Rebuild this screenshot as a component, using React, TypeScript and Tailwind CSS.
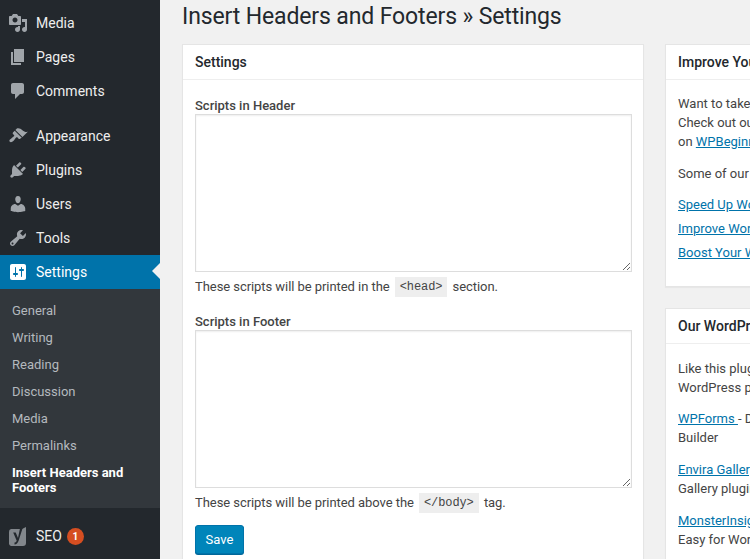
import React from 'react';

// Dashicons paths on a 20x20 grid
const icons: Record<string, string> = {
  media: 'M13 11V4c0-.55-.45-1-1-1h-1.67L9 1H5L3.67 3H2c-.55 0-1 .45-1 1v7c0 .55.45 1 1 1h10c.55 0 1-.45 1-1zM7 4.5c1.38 0 2.5 1.12 2.5 2.5S8.38 9.5 7 9.5 4.5 8.38 4.5 7 5.62 4.5 7 4.5zM14 6h5v10.5c0 1.38-1.12 2.5-2.5 2.5S14 17.88 14 16.5s1.12-2.5 2.5-2.5c.17 0 .34.02.5.05V9h-3V6zm-4 8.05V13h2v3.5c0 1.38-1.12 2.5-2.5 2.5S7 17.88 7 16.5 8.12 14 9.5 14c.17 0 .34.02.5.05z',
  pages: 'M6 15V2h10v13H6zm-1 1h8v2H3V5h2v11z',
  comments: 'M5 2h9c1.1 0 2 .9 2 2v7c0 1.1-.9 2-2 2h-2l-5 5v-5H5c-1.1 0-2-.9-2-2V4c0-1.1.9-2 2-2z',
  appearance: 'M14.48 11.06L7.41 3.99l1.5-1.5c.5-.56 2.3-.47 3.51.32 1.21.8 1.43 1.28 2.91 2.1 1.18.64 2.45 1.26 4.45.85zm-.71.71L6.7 4.7 4.93 6.47c-.39.39-.39 1.02 0 1.41l1.06 1.06c.39.39.39 1.03 0 1.42-.6.6-1.43 1.11-2.21 1.69-.35.26-.7.53-1.01.84C1.43 13.23.91 14.8 1.8 15.7c.9.89 2.47.37 3.8-.86.31-.31.58-.66.84-1.01.58-.78 1.09-1.61 1.69-2.21.39-.39 1.03-.39 1.42 0l1.06 1.06c.39.39 1.02.39 1.41 0z',
  plugins: 'M13.11 4.36L9.87 7.6 8 5.73l3.24-3.24c.35-.34 1.05-.2 1.56.32.52.51.66 1.21.31 1.55zm-8 1.77l.91-1.12 9.01 9.01-1.19.84c-.71.71-2.63 1.16-3.82 1.16H6.14L4.9 17.26c-.59.59-1.54.59-2.12 0-.59-.58-.59-1.53 0-2.12l1.24-1.24v-3.88c0-1.13.4-3.19 1.09-3.89zm7.26 3.97l3.24-3.24c.34-.35 1.04-.21 1.55.31.52.51.66 1.21.31 1.55l-3.24 3.25z',
  users: 'M10 9.25c-2.27 0-2.73-3.44-2.73-3.44C7 4.02 7.82 2 9.97 2c2.16 0 2.98 2.02 2.71 3.81 0 0-.41 3.44-2.68 3.44zm0 2.57L12.72 10c2.39 0 4.52 2.33 4.52 4.53v2.49s-3.65 1.13-7.24 1.13c-3.65 0-7.24-1.13-7.24-1.13v-2.49c0-2.25 1.94-4.48 4.47-4.48z',
  tools: 'M16.68 9.77c-1.34 1.34-3.3 1.67-4.95.99l-5.41 6.52c-.99.99-2.59.99-3.58 0s-.99-2.59 0-3.57l6.52-5.42c-.68-1.65-.35-3.61.99-4.95 1.28-1.28 3.12-1.62 4.72-1.06l-2.89 2.89 2.82 2.82 2.86-2.87c.53 1.58.18 3.39-1.08 4.65zM3.81 16.21c.4.39 1.04.39 1.43 0 .4-.4.4-1.04 0-1.43-.39-.4-1.03-.4-1.43 0-.39.39-.39 1.03 0 1.43z',
  settings: 'M18 16V4c0-1.1-.9-2-2-2H4c-1.1 0-2 .9-2 2v12c0 1.1.9 2 2 2h12c1.1 0 2-.9 2-2zM8 11h1c.55 0 1 .45 1 1s-.45 1-1 1H8v1.5c0 .28-.22.5-.5.5s-.5-.22-.5-.5V13H6c-.55 0-1-.45-1-1s.45-1 1-1h1V5.5c0-.28.22-.5.5-.5s.5.22.5.5V11zm5-2h-1c-.55 0-1-.45-1-1s.45-1 1-1h1V5.5c0-.28.22-.5.5-.5s.5.22.5.5V7h1c.55 0 1 .45 1 1s-.45 1-1 1h-1v5.5c0 .28-.22.5-.5.5s-.5-.22-.5-.5V9z',
};

const MenuItem: React.FC<{ icon: string; label: string; active?: boolean }> = ({ icon, label, active }) => (
  <div className={`relative flex h-[34px] items-center text-[14px] ${active ? 'bg-[#0073aa] text-white' : 'text-[#eeeeee]'}`}>
    <svg viewBox="0 0 20 20" className={`ml-[8px] h-[20px] w-[20px] ${active ? 'text-white' : 'text-[#a0a5aa]'}`} fill="currentColor">
      <path d={icons[icon]} />
    </svg>
    <span className="ml-[8px] pt-[1px]">{label}</span>
    {active && (
      <span className="absolute right-0 top-[8px] h-0 w-0 border-y-[8px] border-r-[8px] border-y-transparent border-r-[#f1f1f1]" />
    )}
  </div>
);

const Sidebar = () => (
  <div className="flex h-full w-[160px] shrink-0 flex-col bg-[#23282d] pt-[6px]">
    <MenuItem icon="media" label="Media" />
    <MenuItem icon="pages" label="Pages" />
    <MenuItem icon="comments" label="Comments" />
    <div className="h-[11px]" />
    <MenuItem icon="appearance" label="Appearance" />
    <MenuItem icon="plugins" label="Plugins" />
    <MenuItem icon="users" label="Users" />
    <MenuItem icon="tools" label="Tools" />
    <MenuItem icon="settings" label="Settings" active />
    <div className="flex h-[219px] flex-col bg-[#32373c] pl-[12px] pt-[8px] text-[13px] text-[#b4b9be]">
      {['General', 'Writing', 'Reading', 'Discussion', 'Media', 'Permalinks'].map(name => (
        <div key={name} className="flex h-[27px] items-center">{name}</div>
      ))}
      <div className="mt-[6px] pr-[20px] font-bold leading-[15px] text-white">Insert Headers and Footers</div>
    </div>
    <div className="h-[11px]" />
    <div className="flex h-[34px] items-center text-[14px] text-[#eeeeee]">
      <svg viewBox="0 0 20 20" className="ml-[8px] h-[20px] w-[20px]">
        <path fill="#82878c" d="M3 3h11l4-2v16a3 3 0 0 1-3 3H3a3 3 0 0 1-2-2V6a3 3 0 0 1 2-3z" />
        <path fill="#23282d" d="M12.5 0h2.8L10.5 15c-.7 2-2 3.3-4 3.6v-2c1-.2 1.8-.8 2.2-1.9L5.2 6.5h2.5l2.3 5.6z" />
      </svg>
      <span className="ml-[8px] pt-[1px]">SEO</span>
      <span className="ml-[5px] flex h-[17px] w-[17px] items-center justify-center rounded-full bg-[#d54e21] text-[10px] font-bold text-white">1</span>
    </div>
  </div>
);

const Code: React.FC<{ children: React.ReactNode }> = ({ children }) => (
  <code className="mx-[2px] inline-block h-[20px] bg-[#eeeeee] px-[5px] align-[1px] font-['Liberation_Mono',monospace] text-[12px] leading-[20px] tracking-[-0.1px]">{children}</code>
);

const ScriptField: React.FC<{ label: string; children: React.ReactNode }> = ({ label, children }) => (
  <div>
    <div className="h-[18px] pt-[1px] font-medium leading-[18px]">{label}</div>
    <textarea className="block h-[158px] w-[437px] border border-[#dddddd] bg-white shadow-[inset_0_1px_2px_rgba(0,0,0,0.07)]" />
    <p className="mt-[4px] h-[20px] pt-[1px] leading-[20px] tracking-[-0.06px]">{children}</p>
  </div>
);

const Card: React.FC<{ title: string; children: React.ReactNode; className?: string }> = ({ title, children, className }) => (
  <div className={`border border-[#e5e5e5] bg-white shadow-[0_1px_1px_rgba(0,0,0,0.04)] ${className ?? ''}`}>
    <div className="flex h-[35px] items-center border-b border-[#eeeeee] px-[12px] text-[14px] font-medium text-[#23282d]">{title}</div>
    {children}
  </div>
);

const Link: React.FC<{ children: React.ReactNode }> = ({ children }) => (
  <a className="text-[#0073aa] underline">{children}</a>
);

export default function App() {
  return (
    <div className="flex h-[559px] w-[750px] overflow-hidden bg-[#f1f1f1] font-['Roboto',sans-serif] text-[13px] text-[#444444]">
      <Sidebar />
      <div className="min-w-0 flex-1 pl-[22px]">
        <h1 className="whitespace-nowrap pt-[1px] text-[23px] leading-[31px] tracking-[-0.13px] text-[#23282d]">Insert Headers and Footers » Settings</h1>
        <div className="mt-[12px] flex items-start">
          <Card title="Settings" className="h-[560px] w-[462px] shrink-0">
            <div className="pl-[12px] pt-[16px]">
              <ScriptField label="Scripts in Header">
                These scripts will be printed in the <Code>&lt;head&gt;</Code> section.
              </ScriptField>
              <div className="h-[16px]" />
              <ScriptField label="Scripts in Footer">
                These scripts will be printed above the <Code>&lt;/body&gt;</Code> tag.
              </ScriptField>
              <button className="mt-[13px] h-[29px] w-[49px] rounded-[3px] border border-[#0073aa] bg-[#0085ba] text-white shadow-[0_1px_0_#006799]">Save</button>
            </div>
          </Card>
          <div className="ml-[21px] w-[300px] shrink-0 whitespace-nowrap leading-[19px]">
            <Card title="Improve Your Site" className="h-[243px]">
              <div className="px-[12px] pt-[14px]">
                <p>Want to take your site to the next level?<br />Check out our WordPress tutorials<br />on <Link>WPBeginner</Link>.</p>
                <p className="mt-[13px]">Some of our popular guides:</p>
                <div className="mt-[12px] flex flex-col gap-[5px]">
                  <Link>Speed Up WordPress</Link>
                  <Link>Improve WordPress Security</Link>
                  <Link>Boost Your WordPress SEO</Link>
                </div>
              </div>
            </Card>
            <Card title="Our WordPress Plugins" className="mt-[21px] h-[260px]">
              <div className="px-[12px] pt-[15px]">
                <p>Like this plugin? Check out our other<br />WordPress plugins:</p>
                <p className="mt-[12px]"><Link>WPForms </Link> - Drag &amp; Drop WordPress Form<br />Builder</p>
                <p className="mt-[13px]"><Link>Envira Gallery</Link> - Responsive WordPress<br />Gallery plugin</p>
                <p className="mt-[13px]"><Link>MonsterInsights</Link> - Google Analytics Made<br />Easy for WordPress</p>
              </div>
            </Card>
          </div>
        </div>
      </div>
    </div>
  );
}
